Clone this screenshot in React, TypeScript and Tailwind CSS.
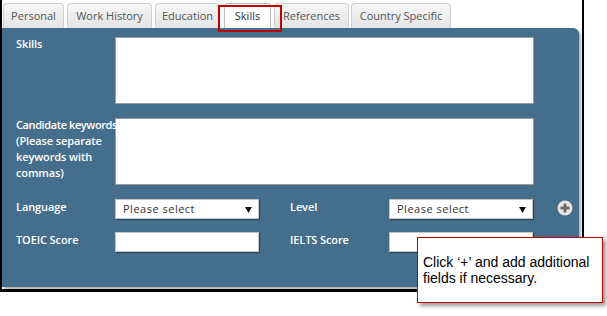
import React from "react";

const tabs = [
  { label: "Personal", ml: "ml-[1px]", w: "w-[61px]" },
  { label: "Work History", ml: "ml-[3px]", w: "w-[85px]" },
  { label: "Education", ml: "ml-[3px]", w: "w-[65px]" },
  { label: "Skills", ml: "ml-[4px]", w: "w-[47px]", active: true },
  { label: "References", ml: "ml-[3px]", w: "w-[75px]" },
  { label: "Country Specific", ml: "ml-[2px]", w: "w-[100px]" },
];

function Select() {
  return (
    <div className="relative flex h-[20px] w-[144px] items-center border border-[#c4c4c4] bg-white pl-[7px] text-[11px] tracking-[0.5px] text-[#333] shadow-[1px_1px_1px_rgba(0,0,0,0.35)]">
      Please select
      <svg className="absolute right-[6px] top-[7px]" width="7" height="6" viewBox="0 0 7 6">
        <polygon points="0,0 7,0 3.5,6" fill="#111" />
      </svg>
    </div>
  );
}

function Input() {
  return <div className="h-[20px] w-[144px] border border-[#c4c4c4] bg-white shadow-[1px_1px_1px_rgba(0,0,0,0.35)]" />;
}

function PlusIcon() {
  return (
    <svg width="16" height="16" viewBox="0 0 16 16">
      <circle cx="8" cy="8" r="7.5" fill="#e4e4e4" />
      <rect x="3.5" y="6.6" width="9" height="2.8" fill="#6a6a6a" />
      <rect x="6.6" y="3.5" width="2.8" height="9" fill="#6a6a6a" />
    </svg>
  );
}

export default function App() {
  const label = "w-[99px] shrink-0 text-[11px] font-semibold leading-4 text-white tracking-[-0.1px]";
  return (
    <div
      className="relative h-[316px] w-[607px] bg-white"
      style={{ fontFamily: '"Open Sans", "DejaVu Sans", sans-serif' }}
    >
      <div className="flex h-[292px] w-[584px] flex-col border-b-[3px] border-l-2 border-r-2 border-black bg-white">
        <div className="flex h-[28px] items-end pt-[3px]">
          {tabs.map((t) => (
            <div
              key={t.label}
              className={`${t.ml} ${t.w} flex h-[25px] items-center justify-center rounded-t-[4px] border border-b-0 text-[11px] ${
                t.active
                  ? "border-[#bdbdbd] bg-white text-[#333]"
                  : "border-[#cfcfcf] bg-gradient-to-b from-[#f6f6f6] to-[#e4e4e4] text-[#555]"
              }`}
            >
              {t.label}
            </div>
          ))}
        </div>
        <div className="flex h-[259px] w-[577px] flex-col rounded-tr-[6px] bg-[#446e8c] pl-[14px] pt-[9px] shadow-[2px_2px_2px_rgba(0,0,0,0.3)]">
          <div className="flex items-start">
            <div className={`${label} mt-[-1px]`}>Skills</div>
            <div className="h-[67px] w-[419px] border border-[#9c9c9c] bg-white" />
          </div>
          <div className="mt-[14px] flex items-start">
            <div className={`${label} relative z-10 mt-[-1px]`}>
              <span className="whitespace-nowrap tracking-[-0.4px]">Candidate keywords</span> (Please separate keywords with commas)
            </div>
            <div className="h-[67px] w-[419px] border border-[#9c9c9c] bg-white" />
          </div>
          <div className="mt-[14px] flex items-start">
            <div className={label}>Language</div>
            <Select />
            <div className={`${label} ml-[31px]`}>Level</div>
            <Select />
            <div className="ml-[24px] mt-[1px]">
              <PlusIcon />
            </div>
          </div>
          <div className="mt-[13px] flex items-start">
            <div className={label}>TOEIC Score</div>
            <Input />
            <div className={`${label} ml-[31px]`}>IELTS Score</div>
            <Input />
          </div>
        </div>
      </div>

      <div className="absolute left-[218px] top-[5px] h-[27px] w-[64px] border-2 border-[#c00000]" />

      <div
        className="absolute left-[417px] top-[237px] h-[66px] w-[186px] border border-[#c00000] bg-white pl-[5px] pt-[16px] text-[14px] leading-[16px] text-black shadow-[3px_3px_4px_rgba(0,0,0,0.4)]"
        style={{ fontFamily: '"Liberation Sans", Arial, sans-serif' }}
      >
        Click ‘+’ and add additional fields if necessary.
      </div>
    </div>
  );
}
